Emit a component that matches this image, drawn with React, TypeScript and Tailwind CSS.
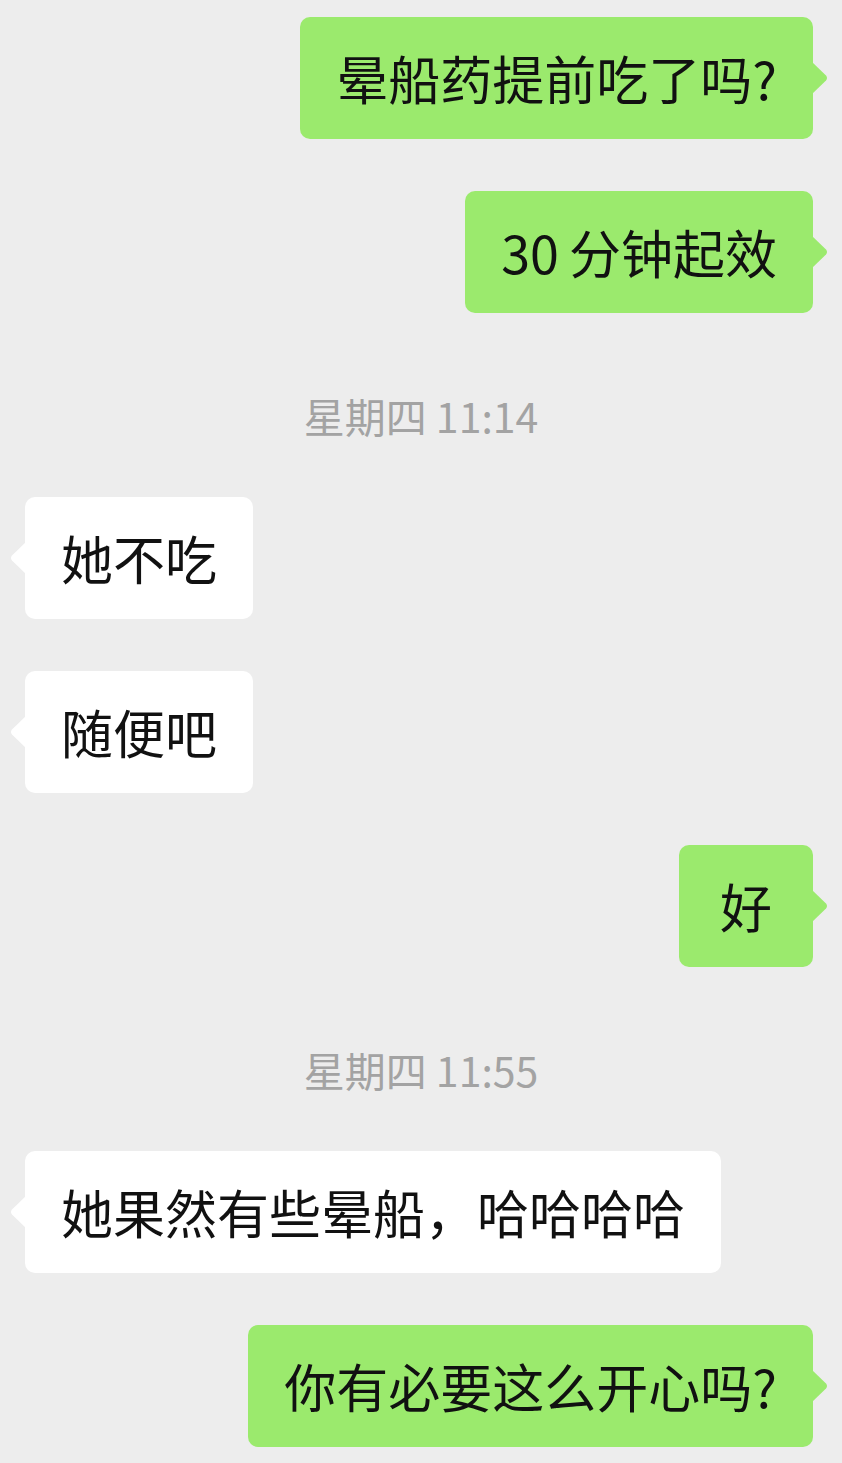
import React from 'react';

type Msg =
  | { kind: 'me' | 'them'; text: React.ReactNode }
  | { kind: 'time'; text: string };

const messages: Msg[] = [
  { kind: 'me', text: '晕船药提前吃了吗?' },
  { kind: 'me', text: <><span className="mr-[10px]">30</span>分钟起效</> },
  { kind: 'time', text: '星期四 11:14' },
  { kind: 'them', text: '她不吃' },
  { kind: 'them', text: '随便吧' },
  { kind: 'me', text: '好' },
  { kind: 'time', text: '星期四 11:55' },
  { kind: 'them', text: '她果然有些晕船，哈哈哈哈' },
  { kind: 'me', text: '你有必要这么开心吗?' },
];

function Tail({ side, color }: { side: 'left' | 'right'; color: string }) {
  // little speech-bubble pointer
  return (
    <svg
      width="18"
      height="34"
      viewBox="0 0 18 34"
      className={
        side === 'right'
          ? 'absolute top-1/2 -translate-y-1/2 right-[-16px]'
          : 'absolute top-1/2 -translate-y-1/2 left-[-16px] -scale-x-100'
      }
    >
      <path d="M0 0 L15 14.5 Q17 17 15 19.5 L0 34 Z" fill={color} />
    </svg>
  );
}

function Bubble({ kind, text }: { kind: 'me' | 'them'; text: React.ReactNode }) {
  const me = kind === 'me';
  return (
    <div className={`flex ${me ? 'justify-end pr-[29px]' : 'justify-start pl-[25px]'}`}>
      <div
        className={`relative min-w-[134px] text-center rounded-[10px] px-[36px] py-[30px] text-[52px] leading-[62px] text-[#111] whitespace-nowrap ${
          me ? 'bg-[#9bea6d]' : 'bg-white'
        }`}
      >
        {text}
        <Tail side={me ? 'right' : 'left'} color={me ? '#9bea6d' : '#ffffff'} />
      </div>
    </div>
  );
}

export default function App() {
  return (
    <div
      className="min-h-screen w-full bg-[#ededed] pt-[17px] pb-[16px] overflow-hidden"
      style={{ fontFamily: '"Noto Sans CJK SC", "Noto Sans", sans-serif' }}
    >
      <div className="flex flex-col gap-[52px]">
        {messages.map((m, i) =>
          m.kind === 'time' ? (
            <div
              key={i}
              className="text-center text-[41px] leading-[40px] text-[#a3a3a3] mt-[30px] mb-[10px]"
            >
              {m.text}
            </div>
          ) : (
            <Bubble key={i} kind={m.kind} text={m.text} />
          )
        )}
      </div>
    </div>
  );
}
